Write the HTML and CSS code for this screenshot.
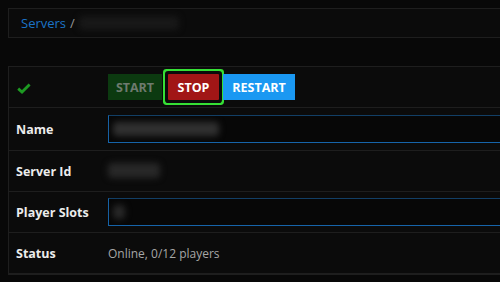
FILE: index.html
```html
<!DOCTYPE html>
<html>
<head>
<meta charset="utf-8">
<link rel="stylesheet" href="styles.css">
</head>
<body>
<div class="page">
  <div class="breadcrumb">
    <a class="crumb-link" href="#">Servers</a><span class="crumb-sep">/</span><span class="blur blur-crumb"></span>
  </div>
  <div class="panel">
    <div class="row row-actions">
      <div class="label">
        <svg class="check" width="14" height="11" viewBox="0 0 14 11"><path d="M1.2 5.6 L5 9 L12.6 1.4" fill="none" stroke="#1d9a22" stroke-width="2.8"/></svg>
      </div>
      <div class="value buttons">
        <button class="btn btn-start">START</button>
        <button class="btn btn-stop">STOP</button>
        <button class="btn btn-restart">RESTART</button>
      </div>
    </div>
    <div class="row row-name">
      <div class="label">Name</div>
      <div class="value"><div class="input"><span class="blur blur-name"></span></div></div>
    </div>
    <div class="row">
      <div class="label">Server Id</div>
      <div class="value"><span class="blur blur-id"></span></div>
    </div>
    <div class="row">
      <div class="label">Player Slots</div>
      <div class="value"><div class="input"><span class="blur blur-slots"></span></div></div>
    </div>
    <div class="row">
      <div class="label">Status</div>
      <div class="value status">Online, 0/12 players</div>
    </div>
  </div>
</div>
</body>
</html>
```

FILE: styles.css
```css
html, body {
  margin: 0;
  padding: 0;
  background: #080808;
  overflow: hidden;
  font-family: "Open Sans", "DejaVu Sans", sans-serif;
}
.page {
  padding: 8px 0 8px 8px;
}
.breadcrumb {
  height: 28px;
  border: 1px solid #1e1e1e;
  border-right: none;
  background: #0b0b0b;
  display: flex;
  align-items: center;
  padding-left: 12px;
  font-size: 13px;
}
.crumb-link {
  color: #1b74c8;
  text-decoration: none;
}
.crumb-sep {
  color: #9a9a9a;
  margin-left: 4px;
  margin-right: 4px;
}
.blur {
  display: inline-block;
  filter: blur(3px);
  border-radius: 4px;
}
.blur-crumb {
  width: 100px;
  height: 14px;
  background: #181818;
}
.panel {
  margin-top: 28px;
  border: 1px solid #1e1e1e;
  border-right: none;
  background: #0b0b0b;
}
.row {
  display: grid;
  grid-template-columns: 91px 1fr;
  align-items: center;
  min-height: 40px;
  border-bottom: 1px solid #1e1e1e;
}
.row-name {
  min-height: 42px;
}
.label {
  padding-left: 7px;
  color: #ececec;
  font-weight: 700;
  font-size: 12.5px;
}
.check {
  display: block;
  margin-left: 1px;
  margin-top: 2px;
}
.value {
  padding-left: 8px;
  color: #a3a3a3;
  font-size: 12px;
  min-width: 0;
}
.buttons {
  display: flex;
  align-items: center;
}
.btn {
  border: none;
  height: 26px;
  padding: 0;
  font-family: inherit;
  font-weight: 700;
  font-size: 12.5px;
  color: #ffffff;
  border-radius: 0;
}
.btn-start {
  background: #0c3a10;
  color: #6e7a6e;
  width: 54px;
  margin-right: 6px;
}
.btn-stop {
  background: #a11616;
  width: 51px;
  margin-right: 4px;
  border-radius: 1px;
  box-shadow: 0 0 0 3px #0b0b0b, 0 0 0 5px #35e035;
}
.btn-restart {
  background: #1a98f2;
  width: 72px;
}
.input {
  height: 26px;
  border: 1px solid #1664aa;
  border-right: none;
  border-top-color: #123f66;
  background: #070707;
  display: flex;
  align-items: center;
  padding-left: 4px;
}
.blur-name {
  width: 106px;
  height: 14px;
  background: #303030;
}
.blur-id {
  width: 52px;
  height: 15px;
  background: #282828;
  margin-top: 2px;
}
.blur-slots {
  width: 12px;
  height: 14px;
  background: #282828;
}
.status {
  color: #a6a6a6;
}
```
